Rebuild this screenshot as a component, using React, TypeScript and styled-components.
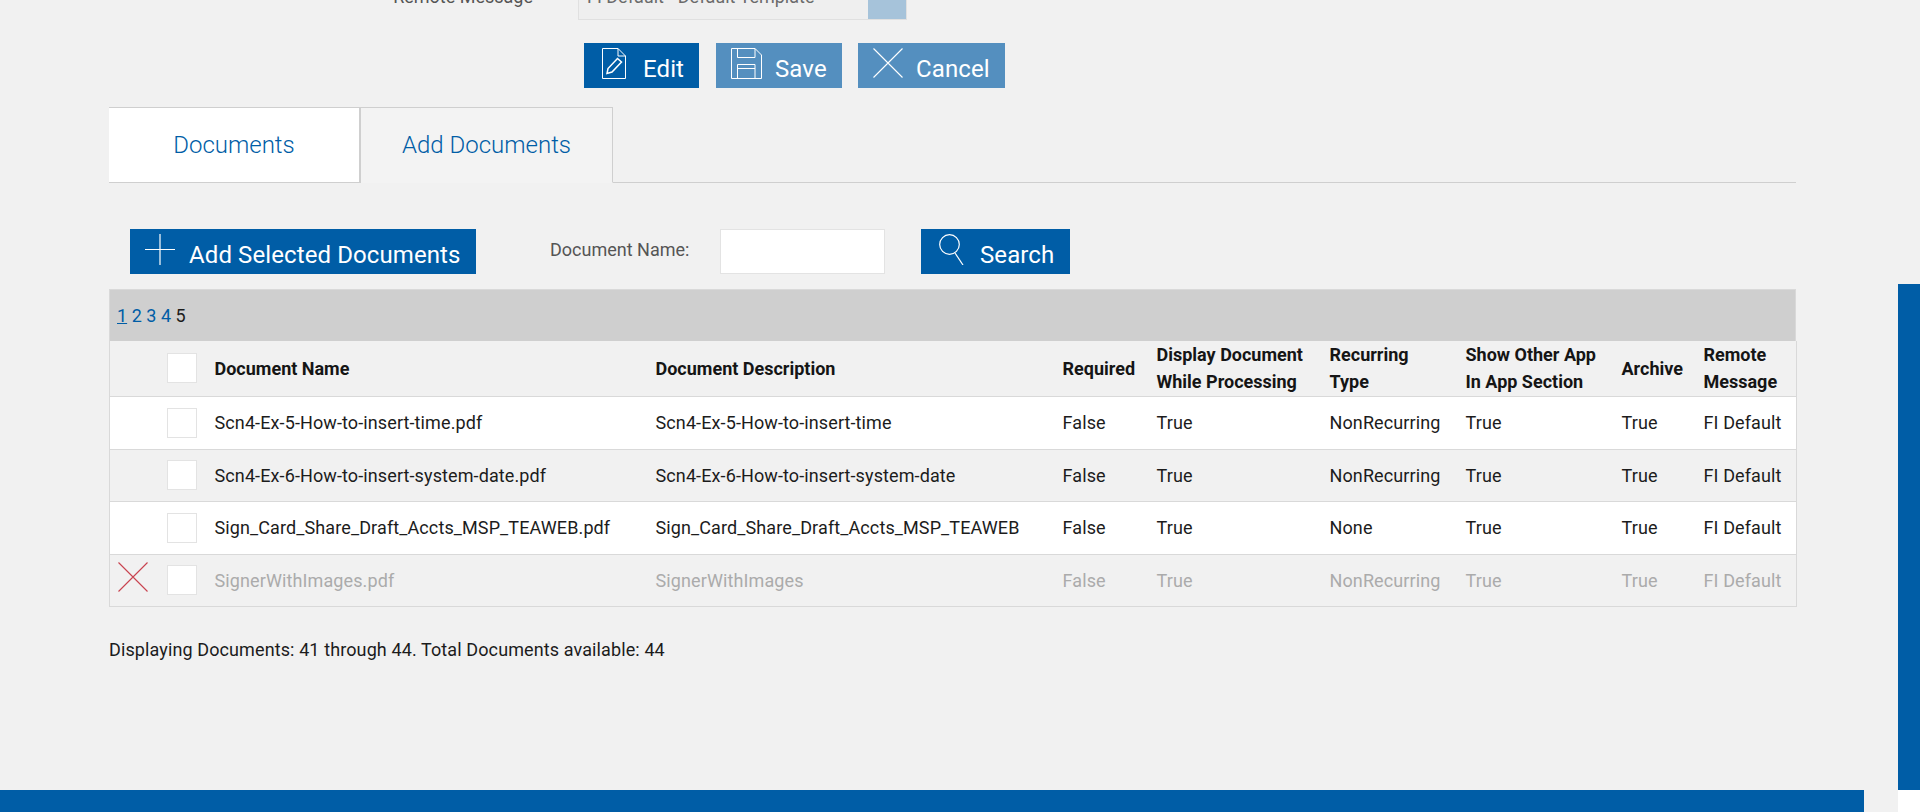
import React from "react";
import styled, { createGlobalStyle } from "styled-components";

const Global = createGlobalStyle`
  *, *::before, *::after { box-sizing: border-box; }
  html, body { margin: 0; padding: 0; height: 812px; overflow: hidden; background: #f1f1f1; }
  body { font-family: Roboto, "Liberation Sans", sans-serif; color: #1c1c1c; }
`;

const BLUE = "#005da6";

const Page = styled.div`
  display: flex;
  width: 1920px;
  height: 812px;
  overflow: hidden;
`;
const Main = styled.main`
  flex: 1;
  min-width: 0;
  display: flex;
  flex-direction: column;
`;
const Rail = styled.div`
  width: 22px;
  display: flex;
  flex-direction: column;
  padding-top: 284px;
  background: #f1f1f1;
`;
const Thumb = styled.div`
  height: 506px;
  background: ${BLUE};
`;
const RailEnd = styled.div`
  flex: 1;
  background: #fff;
`;
const Content = styled.div`
  width: 1687px;
  margin-left: 109px;
`;
const TopRow = styled.div`
  height: 20px;
  overflow: hidden;
  display: flex;
  align-items: flex-end;
`;
const FieldLabel = styled.span`
  width: 424px;
  flex: none;
  text-align: right;
  font-size: 18px;
  line-height: 20px;
  color: #555;
  padding-bottom: 13px;
`;
const SelectBox = styled.div`
  margin-left: 45px;
  width: 329px;
  height: 46px;
  flex: none;
  display: flex;
  background: #efefef;
  border: 1px solid #e0e0e0;
`;
const SelectText = styled.span`
  flex: 1;
  font-size: 18px;
  line-height: 20px;
  padding: 12px 0 0 8px;
  color: #6b6b6b;
`;
const SelectArrow = styled.span`
  width: 38px;
  background: #a6c3da;
  display: flex;
  justify-content: center;
  padding-top: 18px;
`;
const Actions = styled.div`
  display: flex;
  gap: 16px;
  margin: 23px 0 0 475px;
`;
const Button = styled.button<{ $w: number; $muted?: boolean; $pad: number; $gap: number; $after?: number }>`
  width: ${(p) => p.$w}px;
  height: 45px;
  flex: none;
  border: 0;
  margin-right: ${(p) => p.$after ?? 0}px;
  padding: 5px 0 0 ${(p) => p.$pad}px;
  display: flex;
  align-items: flex-start;
  gap: ${(p) => p.$gap}px;
  background: ${(p) => (p.$muted ? "#548fbf" : BLUE)};
  color: #fff;
  font: 400 24px/38px Roboto, "Liberation Sans", sans-serif;
  letter-spacing: 0.1px;
  white-space: nowrap;
  svg { flex: none; display: block; }
`;
const ButtonLabel = styled.span`
  margin-top: 2px;
`;
const Tabs = styled.div`
  display: flex;
  height: 76px;
  margin-top: 19px;
  border-bottom: 1px solid #cfcfcf;
`;
const Tab = styled.div<{ $active?: boolean }>`
  width: 252px;
  height: 76px;
  display: flex;
  align-items: center;
  justify-content: center;
  font-size: 24px;
  font-weight: 300;
  color: ${BLUE};
  background: ${(p) => (p.$active ? "#fff" : "#f3f3f3")};
  border-top: 1px solid #cfcfcf;
  border-right: ${(p) => (p.$active ? 2 : 1)}px solid #cfcfcf;
  border-bottom: 1px solid ${(p) => (p.$active ? "#cfcfcf" : "transparent")};
`;
const Toolbar = styled.div`
  display: flex;
  align-items: flex-start;
  height: 45px;
  margin: 46px 0 0 21px;
`;
const NameLabel = styled.label`
  margin-left: 74px;
  width: 170px;
  flex: none;
  font-size: 18px;
  line-height: 42px;
  color: #555;
`;
const NameInput = styled.input`
  width: 165px;
  height: 45px;
  flex: none;
  background: #fff;
  border: 1px solid #e3e3e3;
  outline: 0;
`;
const SearchSlot = styled.div`
  margin-left: 36px;
`;
const Pager = styled.div`
  margin-top: 15px;
  height: 52px;
  background: #cfcfcf;
  border: 1px solid #d9d9d9;
  border-bottom: 0;
  padding-left: 7px;
  display: flex;
  align-items: center;
  gap: 4.5px;
  font-size: 18px;
`;
const PageLink = styled.a<{ $current?: boolean }>`
  color: ${BLUE};
  text-decoration: ${(p) => (p.$current ? "underline" : "none")};
`;
const PageNow = styled.span`
  color: #1c1c1c;
`;
const Table = styled.table`
  width: 1687px;
  table-layout: fixed;
  border-collapse: collapse;
  border-left: 1px solid #d9d9d9;
  border-right: 1px solid #d9d9d9;
`;
const Row = styled.tr<{ $white?: boolean; $off?: boolean; $h: number }>`
  height: ${(p) => p.$h}px;
  background: ${(p) => (p.$white ? "#fff" : "#f1f1f1")};
  color: ${(p) => (p.$off ? "#ababab" : "#1c1c1c")};
  border-bottom: 1px solid #d9d9d9;
`;
const Th = styled.th`
  padding: 0 0 0 8px;
  text-align: left;
  font-size: 18px;
  font-weight: 700;
  line-height: 27px;
  color: #151515;
  white-space: nowrap;
`;
const Td = styled.td`
  padding: 0 0 0 8px;
  font-size: 18px;
  letter-spacing: 0.11px;
  line-height: 27px;
  white-space: nowrap;
`;
const Check = styled.input.attrs({ type: "checkbox" })`
  appearance: none;
  display: block;
  width: 30px;
  height: 30px;
  margin: 0;
  background: #fff;
  border: 1px solid #e3e3e3;
`;
const Summary = styled.p`
  margin: 29px 0 0;
  font-size: 18px;
  letter-spacing: 0.11px;
  line-height: 27px;
  color: #1c1c1c;
`;
const Footer = styled.footer`
  margin-top: auto;
  width: 1864px;
  height: 22px;
  flex: none;
  background: ${BLUE};
`;

const EditIcon = () => (
  <svg width="24" height="31" viewBox="0 0 24 31" fill="none" stroke="#fff" strokeWidth="1">
    <path d="M.5.5H16L23.5 8V30.5H.5Z" />
    <path d="M16 .5V8H23.5" />
    <path d="M5 25.5 6 20.5 15.5 10.5 19.5 14 10 24Z" strokeWidth="1.5" />
  </svg>
);
const SaveIcon = () => (
  <svg width="31" height="31" viewBox="0 0 31 31" fill="none" stroke="#fff" strokeWidth="1">
    <path d="M.5.5H24L30.5 7V30.5H.5Z" />
    <path d="M6.5 .5V9.5H24V.5" />
    <path d="M6.5 30.5V16.5H24V30.5" />
    <path d="M6.5 20.5H24" />
  </svg>
);
const CancelIcon = ({ color = "#fff", size = 30 }: { color?: string; size?: number }) => (
  <svg width={size} height={size} viewBox="0 0 30 30" fill="none" stroke={color} strokeWidth="1.1">
    <path d="M.5.5 29.5 29.5M29.5.5 .5 29.5" />
  </svg>
);
const PlusIcon = () => (
  <svg width="30" height="31" viewBox="0 0 30 31" fill="none" stroke="#fff" strokeWidth="1.2">
    <path d="M15 0V31M0 15.5H30" />
  </svg>
);
const SearchIcon = () => (
  <svg width="25" height="31" viewBox="0 0 25 31" fill="none" stroke="#fff" strokeWidth="1.2">
    <circle cx="10.5" cy="10.5" r="9.8" />
    <path d="M16 19 24 31" />
  </svg>
);
const ChevronIcon = () => (
  <svg width="10" height="6" viewBox="0 0 10 6" fill="none" stroke="#fff" strokeWidth="1.2">
    <path d="M0 0 5 5 10 0" />
  </svg>
);

const columns = [49, 48, 441, 407, 94, 173, 136, 156, 82, 101];
const rows = [
  ["Scn4-Ex-5-How-to-insert-time.pdf", "Scn4-Ex-5-How-to-insert-time", "NonRecurring"],
  ["Scn4-Ex-6-How-to-insert-system-date.pdf", "Scn4-Ex-6-How-to-insert-system-date", "NonRecurring"],
  ["Sign_Card_Share_Draft_Accts_MSP_TEAWEB.pdf", "Sign_Card_Share_Draft_Accts_MSP_TEAWEB", "None"],
  ["SignerWithImages.pdf", "SignerWithImages", "NonRecurring"],
];

export default function App() {
  return (
    <Page>
      <Global />
      <Main>
        <Content>
          <TopRow>
            <FieldLabel>Remote Message</FieldLabel>
            <SelectBox>
              <SelectText>FI Default - Default Template</SelectText>
              <SelectArrow>
                <ChevronIcon />
              </SelectArrow>
            </SelectBox>
          </TopRow>
          <Actions>
            <Button $w={115} $pad={18} $gap={17} $after={1}>
              <EditIcon />
              <ButtonLabel>Edit</ButtonLabel>
            </Button>
            <Button $w={126} $muted $pad={15} $gap={13}>
              <SaveIcon />
              <ButtonLabel>Save</ButtonLabel>
            </Button>
            <Button $w={147} $muted $pad={15} $gap={13}>
              <CancelIcon />
              <ButtonLabel>Cancel</ButtonLabel>
            </Button>
          </Actions>
          <Tabs>
            <Tab $active>Documents</Tab>
            <Tab>Add Documents</Tab>
          </Tabs>
          <Toolbar>
            <Button $w={346} $pad={15} $gap={14}>
              <PlusIcon />
              <ButtonLabel>Add Selected Documents</ButtonLabel>
            </Button>
            <NameLabel>Document Name:</NameLabel>
            <NameInput />
            <SearchSlot>
              <Button $w={149} $pad={18} $gap={16}>
                <SearchIcon />
                <ButtonLabel>Search</ButtonLabel>
              </Button>
            </SearchSlot>
          </Toolbar>
          <Pager>
            <PageLink $current>1</PageLink>
            <PageLink>2</PageLink>
            <PageLink>3</PageLink>
            <PageLink>4</PageLink>
            <PageNow>5</PageNow>
          </Pager>
          <Table>
            <colgroup>
              {columns.map((w, i) => (
                <col key={i} style={{ width: w }} />
              ))}
            </colgroup>
            <thead>
              <Row $h={55}>
                <Th />
                <Th>
                  <Check />
                </Th>
                <Th>Document Name</Th>
                <Th>Document Description</Th>
                <Th>Required</Th>
                <Th>
                  Display Document
                  <br />
                  While Processing
                </Th>
                <Th>
                  Recurring
                  <br />
                  Type
                </Th>
                <Th>
                  Show Other App
                  <br />
                  In App Section
                </Th>
                <Th>Archive</Th>
                <Th>
                  Remote
                  <br />
                  Message
                </Th>
              </Row>
            </thead>
            <tbody>
              {rows.map((r, i) => (
                <Row key={r[0]} $h={i % 2 === 0 ? 53 : 52} $white={i % 2 === 0} $off={i === 3}>
                  <Td>{i === 3 && <CancelIcon color="#c9434f" />}</Td>
                  <Td>
                    <Check />
                  </Td>
                  <Td>{r[0]}</Td>
                  <Td>{r[1]}</Td>
                  <Td>False</Td>
                  <Td>True</Td>
                  <Td>{r[2]}</Td>
                  <Td>True</Td>
                  <Td>True</Td>
                  <Td>FI Default</Td>
                </Row>
              ))}
            </tbody>
          </Table>
          <Summary>Displaying Documents: 41 through 44. Total Documents available: 44</Summary>
        </Content>
        <Footer />
      </Main>
      <Rail>
        <Thumb />
        <RailEnd />
      </Rail>
    </Page>
  );
}
